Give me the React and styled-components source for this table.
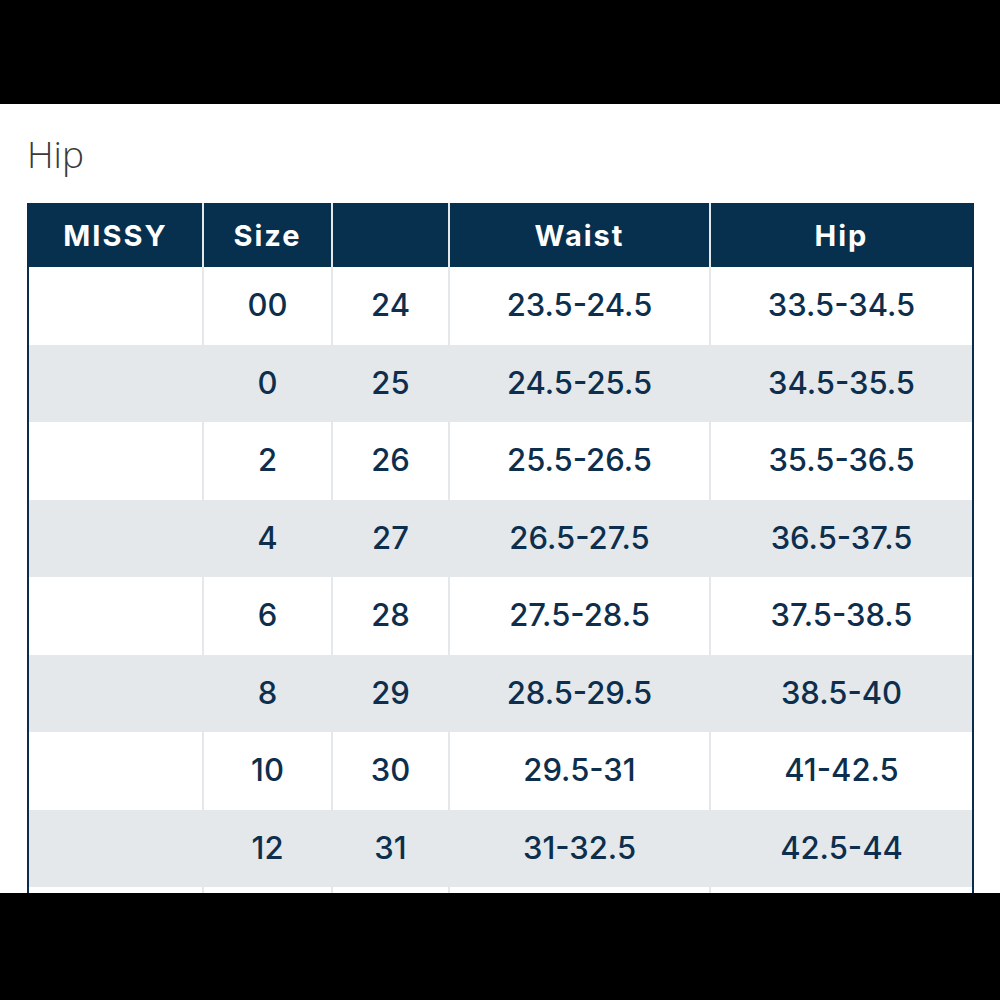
import React from "react"
import styled, { createGlobalStyle } from "styled-components"

const GlobalStyle = createGlobalStyle`
    html, body {
        margin: 0;
        padding: 0;
        background: #000;
    }
    body {
        font-family: "Open Sans", "Liberation Sans", sans-serif;
    }
`

const Screen = styled.div`
    width: 1000px;
    height: 1000px;
    display: flex;
    flex-direction: column;
    background: #000;
`

const Bar = styled.div`
    height: ${({ size }) => size}px;
    flex: none;
    background: #000;
`

const Page = styled.div`
    flex: 1;
    overflow: hidden;
    background: #fff;
    padding: 26px 27px 0 27px;
`

const Title = styled.h2`
    margin: 0;
    font-size: 37px;
    line-height: 48px;
    font-weight: 300;
    color: #3a3a3a;
`

const Table = styled.table`
    margin-top: 25px;
    width: 945px;
    border-collapse: collapse;
    table-layout: fixed;
    border-left: 2px solid #0b2d4b;
    border-right: 2px solid #0b2d4b;
    font-family: Inter, "Open Sans", sans-serif;
`

const HeadCell = styled.th`
    height: 64px;
    padding: 0;
    background: #07304f;
    color: #fff;
    font-size: 29px;
    font-weight: 700;
    letter-spacing: 2px;
    text-align: center;
    border-left: 2px solid #e4e8eb;
    &:first-child {
        border-left: none;
    }
`

const Row = styled.tr`
    background: ${({ striped }) => (striped ? "#e4e8eb" : "#fff")};
`

const Cell = styled.td`
    box-sizing: border-box;
    height: 77.5px;
    padding: 0 0 2px;
    text-align: center;
    color: #0d2f4d;
    font-size: 31px;
    font-weight: 500;
    border-left: 2px solid #e4e8eb;
    &:first-child {
        border-left: none;
    }
`

const columns = [
    { label: "MISSY", width: 175 },
    { label: "Size", width: 129 },
    { label: "", width: 117 },
    { label: "Waist", width: 261 },
    { label: "Hip", width: 263 },
]

const rows = [
    ["00", "24", "23.5-24.5", "33.5-34.5"],
    ["0", "25", "24.5-25.5", "34.5-35.5"],
    ["2", "26", "25.5-26.5", "35.5-36.5"],
    ["4", "27", "26.5-27.5", "36.5-37.5"],
    ["6", "28", "27.5-28.5", "37.5-38.5"],
    ["8", "29", "28.5-29.5", "38.5-40"],
    ["10", "30", "29.5-31", "41-42.5"],
    ["12", "31", "31-32.5", "42.5-44"],
    // next row only peeks out under the bottom bar
    ["", "", "", ""],
]

export default function App() {
    return (
        <Screen>
            <GlobalStyle />
            <Bar size={104} />
            <Page>
                <Title>Hip</Title>
                <Table>
                    <colgroup>
                        {columns.map((col, i) => <col key={i} style={{ width: col.width }} />)}
                    </colgroup>
                    <thead>
                        <tr>
                            {columns.map((col, i) => <HeadCell key={i}>{col.label}</HeadCell>)}
                        </tr>
                    </thead>
                    <tbody>
                        {rows.map((row, index) => (
                            <Row key={index} striped={index % 2 === 1}>
                                <Cell />
                                {row.map((value, i) => <Cell key={i}>{value}</Cell>)}
                            </Row>
                        ))}
                    </tbody>
                </Table>
            </Page>
            <Bar size={107} />
        </Screen>
    )
}
